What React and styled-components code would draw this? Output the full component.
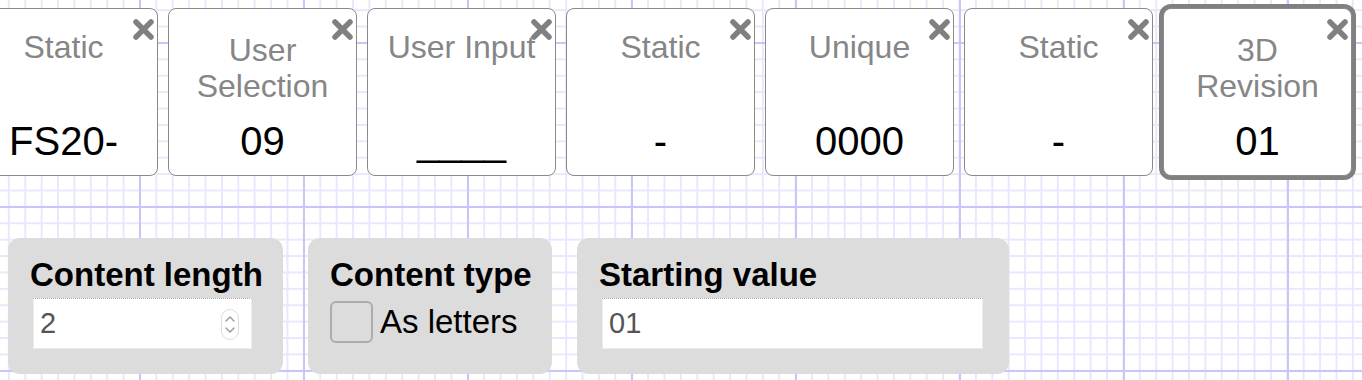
import React from "react"
import styled, { createGlobalStyle } from "styled-components"

const GlobalStyle = createGlobalStyle`
  html, body {
    margin: 0;
  }
  body {
    font-family: "Liberation Sans", Helvetica, Arial, sans-serif;
    background-color: #fff;
    background-image:
      linear-gradient(to right, #c6c6fa 2px, transparent 2px),
      linear-gradient(to bottom, #c6c6fa 2px, transparent 2px),
      linear-gradient(to right, #e8e8fd 2px, transparent 2px),
      linear-gradient(to bottom, #e8e8fd 2px, transparent 2px);
    background-size: 164px 164px, 164px 164px, 16.4px 16.4px, 16.4px 16.4px;
    background-position: 139px 42px, 139px 42px, 139px 42px, 139px 42px;
  }
`

const Page = styled.div`
  padding-top: 8px;
  overflow: hidden;
  height: 372px;
`

const CardRow = styled.div`
  display: flex;
  gap: 10px;
  margin-left: -31px;
`

const Card = styled.div`
  position: relative;
  flex: 0 0 189px;
  height: 168px;
  box-sizing: border-box;
  display: flex;
  flex-direction: column;
  justify-content: space-between;
  padding: 20px 14px 11px;
  background: #fff;
  border: 1px solid #8a8a8a;
  border-radius: 8px;
  text-align: center;
  box-shadow: ${p => (p.selected ? "0 0 0 4px #808080" : "none")};
`

const Label = styled.div`
  font-size: 32px;
  line-height: 36px;
  color: #868686;
  margin-top: ${p => (p.wrapped ? "3px" : "0")};
`

const Value = styled.div`
  font-size: 40px;
  line-height: 46px;
  color: #000;
  white-space: nowrap;
`

const Close = styled.button`
  position: absolute;
  top: 9px;
  right: 2px;
  width: 23px;
  height: 23px;
  padding: 0;
  border: 0;
  background: none;
  cursor: pointer;

  svg {
    display: block;
  }
`

const PanelRow = styled.div`
  display: flex;
  align-items: stretch;
  gap: 25px;
  margin: 62px 0 0 8px;
`

const Panel = styled.div`
  width: ${p => p.width}px;
  height: 136px;
  box-sizing: border-box;
  padding: 18px 22px 25px;
  background: #dcdcdc;
  border-radius: 12px;
`

const PanelTitle = styled.div`
  font-size: 33px;
  font-weight: 700;
  line-height: 37px;
  color: #000;
  white-space: nowrap;
`

const Field = styled.div`
  position: relative;
  width: ${p => p.width}px;
  height: 51px;
  box-sizing: border-box;
  margin: 5px 0 0 3px;
  background: #fff;
  border: 1px solid #ececec;
  border-top: 1px dotted #a8a8a8;
`

const FieldInput = styled.input`
  width: 100%;
  height: 100%;
  box-sizing: border-box;
  border: 0;
  outline: none;
  padding: 0 6px;
  background: transparent;
  font-family: inherit;
  font-size: 29px;
  color: #555;
`

const Spinner = styled.span`
  position: absolute;
  right: 12px;
  top: 10px;
  width: 18px;
  height: 31px;
  box-sizing: border-box;
  border: 1px solid #dcdcec;
  border-radius: 9px;
  display: flex;
  flex-direction: column;
  align-items: center;
  justify-content: center;
  gap: 5px;
`

const CheckRow = styled.label`
  display: flex;
  align-items: center;
  gap: 7px;
  margin-top: 8px;
  font-size: 33px;
  color: #000;
`

const Box = styled.span`
  width: 43px;
  height: 42px;
  box-sizing: border-box;
  border: 2px solid #acacac;
  border-radius: 6px;
`

const CloseIcon = () => (
  <svg width="23" height="23" viewBox="0 0 23 23">
    <path
      d="M4 4 L19 19 M19 4 L4 19"
      stroke="#808080"
      strokeWidth="5.5"
      strokeLinecap="round"
    />
  </svg>
)

const Chevron = ({ down }) => (
  <svg width="10" height="6" viewBox="0 0 10 6">
    <path
      d={down ? "M1 1 L5 5 L9 1" : "M1 5 L5 1 L9 5"}
      stroke="#999"
      strokeWidth="1.4"
      fill="none"
      strokeLinecap="round"
    />
  </svg>
)

const parts = [
  { label: "Static", value: "FS20-" },
  { label: "User Selection", value: "09", wrapped: true },
  { label: "User Input", value: "____" },
  { label: "Static", value: "-" },
  { label: "Unique", value: "0000" },
  { label: "Static", value: "-" },
  { label: "3D Revision", value: "01", wrapped: true, selected: true },
]

const App = () => (
  <Page>
    <GlobalStyle />
    <CardRow>
      {parts.map((p, i) => (
        <Card key={i} selected={p.selected}>
          <Close aria-label="Remove">
            <CloseIcon />
          </Close>
          <Label wrapped={p.wrapped}>{p.label}</Label>
          <Value>{p.value}</Value>
        </Card>
      ))}
    </CardRow>
    <PanelRow>
      <Panel width={275}>
        <PanelTitle>Content length</PanelTitle>
        <Field width={219}>
          <FieldInput defaultValue="2" />
          <Spinner>
            <Chevron />
            <Chevron down />
          </Spinner>
        </Field>
      </Panel>
      <Panel width={244}>
        <PanelTitle>Content type</PanelTitle>
        <CheckRow>
          <Box />
          As letters
        </CheckRow>
      </Panel>
      <Panel width={432}>
        <PanelTitle>Starting value</PanelTitle>
        <Field width={381}>
          <FieldInput defaultValue="01" />
        </Field>
      </Panel>
    </PanelRow>
  </Page>
)

export default App
